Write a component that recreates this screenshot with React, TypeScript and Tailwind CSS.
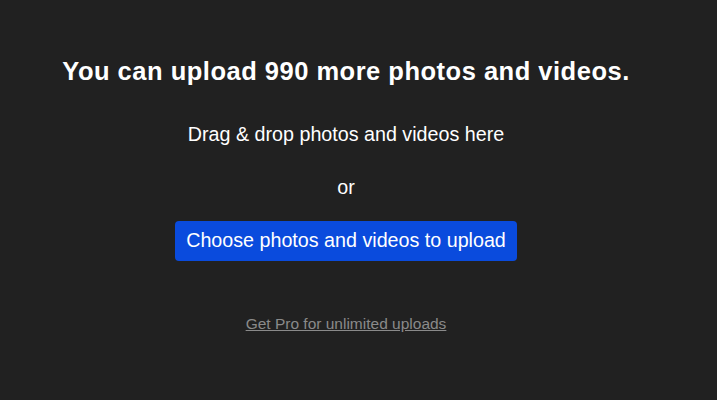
export default function App() {
  return (
    <div className="w-[717px] h-[400px] bg-[#212121] overflow-hidden" style={{ fontFamily: '"Liberation Sans", Arial, sans-serif' }}>
      <div className="w-[692px] flex flex-col items-center pt-[56px]">
        <h1 className="text-[25.5px] leading-[30px] font-bold text-white tracking-[0.5px]">You can upload 990 more photos and videos.</h1>
        <p className="mt-[36px] text-[19.7px] leading-[24px] text-white">Drag &amp; drop photos and videos here</p>
        <p className="mt-[29px] text-[19.7px] leading-[24px] text-white">or</p>
        <button className="mt-[22px] h-[40px] w-[342px] rounded-[4px] bg-[#0a4bdd] text-white text-[19.7px]">Choose photos and videos to upload</button>
        <a href="#" className="mt-[54px] text-[15.5px] leading-[18px] text-[#8a8a8a] underline">Get Pro for unlimited uploads</a>
      </div>
    </div>
  );
}
